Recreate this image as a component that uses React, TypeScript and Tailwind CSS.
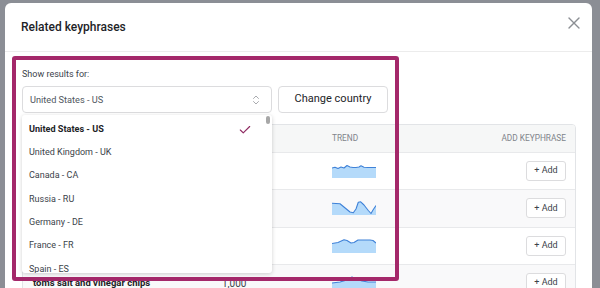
import React from 'react';
import { X, Check, ChevronsUpDown } from 'lucide-react';

const countries = [
  'United States - US',
  'United Kingdom - UK',
  'Canada - CA',
  'Russia - RU',
  'Germany - DE',
  'France - FR',
  'Spain - ES',
  'Italy - IT',
];

type Pt = [number, number];

const rows: { phrase: string; volume: string; trend: Pt[]; striped: boolean }[] = [
  {
    phrase: 'salt and vinegar chips',
    volume: '33,100',
    striped: false,
    trend: [[0, 4], [3, 3.2], [6, 4.5], [9, 3], [12, 4], [15, 1.5], [18, 3], [21, 3.5], [24, 3.5], [27, 3], [29, 1.8], [32, 3.2], [36, 3.5], [44, 3.5]],
  },
  {
    phrase: 'best salt and vinegar chips',
    volume: '2,400',
    striped: true,
    trend: [[0, 2.2], [8, 2.8], [18, 11], [21.3, 11.8], [24, 8], [26.3, 1.2], [28.7, 0.8], [32, 4], [36.3, 9.5], [39, 12.5], [41, 9], [44, 4.5]],
  },
  {
    phrase: 'salt vinegar chips',
    volume: '1,900',
    striped: false,
    trend: [[0, 4.5], [6, 3.5], [12, 0.8], [15, 1.5], [19, 4], [22, 3.5], [26, 1], [38, 1], [41, 1.5], [44, 4]],
  },
  {
    phrase: 'toms salt and vinegar chips',
    volume: '1,000',
    striped: true,
    trend: [[0, 7], [8, 6], [15, 4], [20, 1], [24, 3], [30, 5], [36, 6], [44, 6]],
  },
];

// Small filled sparkline for the trend column
const Sparkline: React.FC<{ points: Pt[] }> = ({ points }) => {
  const line = points.map((p, i) => `${i ? 'L' : 'M'}${p[0]} ${p[1]}`).join(' ');
  const area = `${line} L44 14 L0 14 Z`;
  return (
    <svg width="44" height="14" viewBox="0 0 44 14" className="block">
      <path d={area} fill="#b4dafa" />
      <path d={line} fill="none" stroke="#3f82d8" strokeWidth="1.1" strokeLinejoin="round" />
    </svg>
  );
};

export default function App() {
  return (
    <div
      className="relative h-[288px] w-[600px] overflow-hidden bg-[#8b8e95] pl-[5px] pr-[8px] pt-[3px]"
      style={{ fontFamily: 'Roboto, "Liberation Sans", sans-serif' }}
    >
      <div className="h-full rounded-t-[6px] bg-white">
        {/* Header */}
        <div className="flex h-[49px] items-center justify-between border-b border-[#ececec] pl-[16px] pr-[8px]">
          <h1 className="text-[12px] font-medium text-[#1d2327]">Related keyphrases</h1>
          <button className="mt-[-9px] text-[#8c8f94]">
            <X size={20} strokeWidth={1.6} />
          </button>
        </div>

        {/* Body */}
        <div className="pl-[17px] pr-[16px] pt-[16px]">
          <p className="h-[12px] text-[9px] leading-[12px] text-[#3c434a]">Show results for:</p>

          <div className="mt-[6px] flex gap-[6px]">
            <div className="relative w-[250px]">
              <div className="flex h-[27px] items-center justify-between rounded-[4px] border border-[#dcdcde] pl-[7px] pr-[9px] text-[9.2px] text-[#50575e]">
                <span>United States - US</span>
                <ChevronsUpDown size={12} strokeWidth={1.5} className="text-[#8c8f94]" />
              </div>

              {/* Open dropdown */}
              <div className="absolute left-0 top-[29px] z-10 h-[158px] w-[250px] overflow-hidden rounded-[3px] bg-white py-[3px] shadow-[0_1px_4px_rgba(0,0,0,0.18)]">
                {countries.map((c, i) => (
                  <div
                    key={c}
                    className={
                      i === 0
                        ? 'flex h-[23.3px] items-center justify-between pl-[7px] pr-[20px] text-[9.1px] font-bold text-[#1d2327]'
                        : 'flex h-[23.3px] items-center pl-[7px] text-[9px] text-[#3c434a]'
                    }
                  >
                    <span>{c}</span>
                    {i === 0 && <Check size={14} strokeWidth={2} className="text-[#8f2b62]" />}
                  </div>
                ))}
                <div className="absolute right-[2px] top-[1px] h-[8px] w-[4px] rounded-full bg-[#a7a7a7]" />
              </div>
            </div>

            <button className="h-[27px] w-[110px] rounded-[4px] border border-[#dcdcde] text-[11px] text-[#1d2327]">
              Change country
            </button>
          </div>

          {/* Table */}
          <div className="mt-[11px] overflow-hidden rounded-[4px] border border-[#e2e4e7]">
            <div className="grid h-[27px] grid-cols-[189px_110px_1fr_auto] items-center bg-[#f6f7f7] pl-[10px] pr-[9px] text-[8.3px] uppercase text-[#80848a]">
              <span>Keyphrase</span>
              <span>Volume</span>
              <span>Trend</span>
              <span>Add keyphrase</span>
            </div>
            {rows.map((r) => (
              <div
                key={r.phrase}
                className={`grid h-[37.3px] grid-cols-[189px_110px_1fr_auto] items-center border-t border-[#e8e9eb] pl-[10px] pr-[9px] ${r.striped ? 'bg-[#f9f9fa]' : 'bg-white'}`}
              >
                <span className="text-[9.5px] font-bold text-[#1d2327]">{r.phrase}</span>
                <span className="text-[10px] text-[#3c434a]">{r.volume}</span>
                <Sparkline points={r.trend} />
                <button className="h-[20px] w-[40px] rounded-[3px] border border-[#dcdcde] bg-white text-[9px] text-[#3c434a]">
                  + Add
                </button>
              </div>
            ))}
          </div>
        </div>
      </div>

      {/* Highlight frame drawn over the screenshot */}
      <div className="pointer-events-none absolute left-[12px] top-[56px] z-20 h-[225px] w-[387px] rounded-[3px] border-4 border-[#a4286a]" />
    </div>
  );
}
